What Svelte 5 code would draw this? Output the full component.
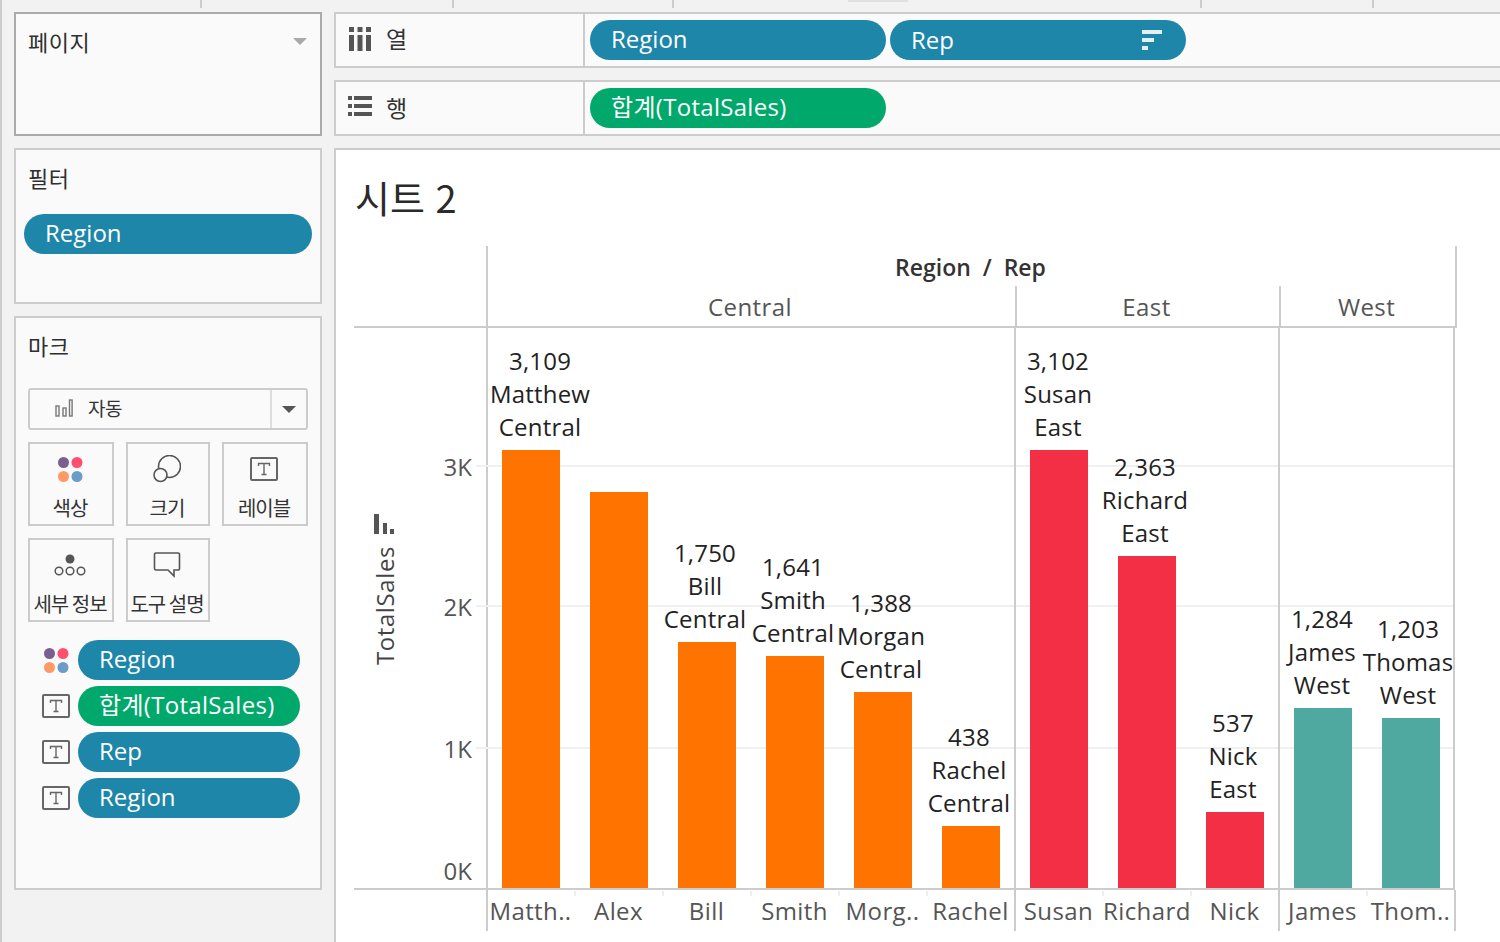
<script>
  const panes = [
    { color: '#ff7300', w: 528, bars: [
      { h: 438, l: ['3,109','Matthew','Central'], n: 'Matth..', dx: 9 },
      { h: 396, l: [], n: 'Alex' },
      { h: 246, l: ['1,750','Bill','Central'], n: 'Bill', dx: -2 },
      { h: 232, l: ['1,641','Smith','Central'], n: 'Smith', dx: -2 },
      { h: 196, l: ['1,388','Morgan','Central'], n: 'Morg..', dx: -2 },
      { h: 62, l: ['438','Rachel','Central'], n: 'Rachel', dx: -2 } ] },
    { color: '#f32f45', w: 264, bars: [
      { h: 438, l: ['3,102','Susan','East'], n: 'Susan', dx: -1 },
      { h: 332, l: ['2,363','Richard','East'], n: 'Richard', dx: -2 },
      { h: 76, l: ['537','Nick','East'], n: 'Nick', dx: -2 } ] },
    { color: '#4fa9a0', w: 176, bars: [
      { h: 180, l: ['1,284','James','West'], n: 'James', dx: -1 },
      { h: 170, l: ['1,203','Thomas','West'], n: 'Thom..', dx: -3 } ] }
  ];
  const ticks = [200, 252, 220, 528, 172];
  const heads = [['Central', 527], ['East', 264], ['West', 176]];
  const axis = [['3K', 467], ['2K', 607], ['1K', 749], ['0K', 871]];
  const markPills = [
    { k: 'color', t: 'Region', c: 'blue' },
    { k: 'text', t: '합계(TotalSales)', c: 'green' },
    { k: 'text', t: 'Rep', c: 'blue' },
    { k: 'text', t: 'Region', c: 'blue' }
  ];
</script>

{#snippet dots(size)}
  <svg class="ic" width={size} height={size} viewBox="0 0 26 26">
    <circle cx="6.500" cy="6.500" r="5.500" fill="#7b5f8f"/><circle cx="20" cy="6.500" r="5.500" fill="#ff4f6e"/>
    <circle cx="6.500" cy="20.500" r="5.500" fill="#ff9966"/><circle cx="20" cy="20.500" r="5.500" fill="#6b9cc9"/>
  </svg>
{/snippet}
{#snippet tbox(w, h)}
  <svg class="ic" width={w} height={h} viewBox="0 0 28 24">
    <rect x="1" y="1" width="26" height="22" rx="1" fill="none" stroke="#666" stroke-width="2"/>
    <path d="M8.500 9V6.500h11V9M14 6.500v11M11.500 17.500h5" fill="none" stroke="#666" stroke-width="1.400"/>
  </svg>
{/snippet}

<div class="page">
  <div class="topticks">
    {#each ticks as t}<span class="tick" style="width:{t}px"></span>{/each}
    <span class="topmark"></span>
  </div>
  <div class="layout">
    <aside class="side">
      <section class="card pages">
        <div class="cardtitle"><span>페이지</span><i class="caret"></i></div>
      </section>
      <section class="card filters">
        <div class="cardtitle">필터</div>
        <div class="pill blue wide">Region</div>
      </section>
      <section class="card marks">
        <div class="cardtitle">마크</div>
        <div class="select">
          <span class="selmain">
            <svg width="18" height="18" viewBox="0 0 18 18" fill="none" stroke="#777" stroke-width="1.400"><rect x="1" y="7" width="3" height="10"/><rect x="8" y="9" width="3" height="8"/><rect x="14.500" y="1" width="2.600" height="16"/></svg>
            <span>자동</span>
          </span>
          <span class="selbtn"><i class="caret dark"></i></span>
        </div>
        <div class="tiles">
          <div class="tile"><span class="tileic">{@render dots(26)}</span><span>색상</span></div>
          <div class="tile">
            <span class="tileic"><svg class="ic" width="28" height="28" viewBox="0 0 28 28" fill="none" stroke="#555" stroke-width="1.600"><circle cx="16.500" cy="11.500" r="11"/><circle cx="7.500" cy="20" r="6.500" fill="#fafafa"/></svg></span>
            <span>크기</span>
          </div>
          <div class="tile"><span class="tileic">{@render tbox(28, 24)}</span><span>레이블</span></div>
          <div class="tile">
            <span class="tileic"><svg class="ic" width="32" height="24" viewBox="0 0 32 24"><circle cx="16" cy="6" r="4.500" fill="#555"/><g fill="none" stroke="#555" stroke-width="1.500"><circle cx="5" cy="18" r="3.800"/><circle cx="16" cy="18" r="3.800"/><circle cx="27" cy="18" r="3.800"/></g></svg></span>
            <span>세부 정보</span>
          </div>
          <div class="tile">
            <span class="tileic"><svg class="ic" width="28" height="26" viewBox="0 0 28 26"><path d="M3 1h22a1.500 1.500 0 0 1 1.500 1.500v14a1.500 1.500 0 0 1-1.500 1.500h-4v6l-6-6H3a1.500 1.500 0 0 1-1.500-1.500v-14A1.500 1.500 0 0 1 3 1z" fill="none" stroke="#555" stroke-width="1.600"/></svg></span>
            <span>도구 설명</span>
          </div>
        </div>
        <div class="markpills">
          {#each markPills as p}
            <div class="markrow">
              <span class="mi">{#if p.k === 'color'}{@render dots(26)}{:else}{@render tbox(28, 24)}{/if}</span>
              <div class="pill {p.c} fill">{p.t}</div>
            </div>
          {/each}
        </div>
      </section>
    </aside>

    <main class="main">
      <div class="shelf">
        <div class="shelfhead first">
          <svg width="22" height="24" viewBox="0 0 22 24" fill="#555"><rect x="0" y="0" width="5" height="5"/><rect x="8.500" y="0" width="5" height="5"/><rect x="17" y="0" width="5" height="5"/><rect x="0" y="8" width="5" height="16"/><rect x="8.500" y="8" width="5" height="16"/><rect x="17" y="8" width="5" height="16"/></svg>
          <span>열</span>
        </div>
        <div class="shelfbody">
          <div class="pill blue sh">Region</div>
          <div class="pill blue sh sort">Rep
            <svg width="20" height="20" viewBox="0 0 20 20" fill="#e3f1f5"><rect width="20" height="4"/><rect y="8" width="12" height="4"/><rect y="16" width="6" height="4"/></svg>
          </div>
        </div>
      </div>
      <div class="shelf">
        <div class="shelfhead second">
          <svg width="24" height="20" viewBox="0 0 24 20" fill="#555"><rect width="4" height="4"/><rect x="6" width="18" height="4"/><rect y="8" width="4" height="4"/><rect x="6" y="8" width="18" height="4"/><rect y="16" width="4" height="4"/><rect x="6" y="16" width="18" height="4"/></svg>
          <span>행</span>
        </div>
        <div class="shelfbody">
          <div class="pill green sh">합계(TotalSales)</div>
        </div>
      </div>

      <div class="sheet">
        <h1>시트 2</h1>
        <div class="viz">
          <div class="headrow">
            <div class="corner"></div>
            <div class="headcol">
              <div class="vtitle">Region&nbsp; /&nbsp; Rep</div>
              <div class="regions">
                {#each heads as h}<div class="region" style="width:{h[1]}px">{h[0]}</div>{/each}
              </div>
            </div>
          </div>
          <div class="plotrow">
            <div class="axis">
              <div class="axtitle">
                <svg width="20" height="20" viewBox="0 0 20 20" fill="#555"><rect x="0" y="0" width="5" height="20"/><rect x="9" y="9" width="4" height="11"/><rect x="16" y="15" width="4" height="5"/></svg>
                <span>TotalSales</span>
              </div>
              {#each axis as a}
                <span class="axlabel" style="top:{a[1] - 328}px">{a[0]}</span>
              {/each}
            </div>
            <div class="plot">
              {#each [606, 748, 466] as g}<i class="grid" style="top:{g - 329}px"></i>{/each}
              {#each panes as p}
                <div class="pane" style="width:{p.w}px">
                  {#each p.bars as b}
                    <div class="col">
                      {#if b.l.length}
                        <div class="lab" style="transform:translateX({b.dx}px)">{#each b.l as line}<div>{line}</div>{/each}</div>
                      {/if}
                      <div class="bar" style="height:{b.h}px;background:{p.color}"></div>
                    </div>
                  {/each}
                </div>
              {/each}
            </div>
          </div>
          <div class="namerow">
            <div class="corner2"></div>
            {#each panes as p}
              <div class="namepane" style="width:{p.w}px">
                {#each p.bars as b}<div class="name">{b.n}</div>{/each}
              </div>
            {/each}
          </div>
        </div>
      </div>
    </main>
  </div>
</div>

<style>
  :global(body) { margin: 0; background: #f2f2f2; }
  .page { width: 1500px; height: 942px; overflow: hidden; position: relative; font-family: "Noto Sans", "Noto Sans CJK KR", sans-serif; color: #333; border-left: 2px solid #ccc; box-sizing: border-box; }
  .topticks { height: 8px; display: flex; }
  .tick { display: block; height: 8px; border-right: 2px solid #ccc; box-sizing: border-box; }
  .topmark { position: absolute; left: 846px; top: 0; width: 60px; height: 2px; background: #e0e0e0; }
  .layout { display: flex; gap: 12px; padding: 4px 0 0 12px; }
  .side { width: 308px; display: flex; flex-direction: column; gap: 12px; flex: none; }
  .card { box-sizing: border-box; background: #fafafa; border: 2px solid #ccc; padding: 0 0 0 12px; }
  .pages { height: 124px; border-color: #aaa; }
  .filters { height: 156px; padding-left: 8px; }
  .filters .cardtitle { padding-left: 4px; }
  .marks { height: 574px; }
  .cardtitle { display: flex; justify-content: space-between; align-items: center; font-family: "Noto Sans CJK KR", sans-serif; font-size: 22px; line-height: 32px; padding-top: 11px; color: #2f2f2f; letter-spacing: .5px; }
  .caret { display: block; width: 0; height: 0; border: 7px solid transparent; border-top: 7px solid #aaa; border-bottom: 0; margin-right: 13px; }
  .caret.dark { border-top-color: #555; margin: 0; }
  .pill { box-sizing: border-box; height: 40px; border-radius: 20px; color: #fff; font-size: 24px; line-height: 38px; padding-left: 21px; font-family: "Open Sans", "Noto Sans CJK KR", sans-serif; font-weight: 400; white-space: nowrap; }
  .blue { background: #1e86a8; }
  .green { background: #00a96b; letter-spacing: .3px; }
  .wide { width: 288px; margin-top: 21px; }
  .select { margin-top: 27px; width: 280px; height: 42px; box-sizing: border-box; border: 2px solid #ccc; border-radius: 3px; display: flex; }
  .selmain { flex: 1; display: flex; align-items: center; gap: 15px; padding: 0 0 3px 25px; border-right: 2px solid #ddd; font: 19px/1 "Noto Sans CJK KR", sans-serif; letter-spacing: -.5px; }
  .selbtn { width: 34px; display: flex; align-items: center; justify-content: center; }
  .tiles { display: grid; grid-template-columns: 86px 84px 86px; gap: 12px 12px; width: 280px; margin-top: 12px; }
  .tile { box-sizing: border-box; height: 84px; border: 2px solid #ccc; display: flex; flex-direction: column; align-items: center; justify-content: space-between; padding: 11px 2px 3px 0; font: 20px/26px "Noto Sans CJK KR", sans-serif; letter-spacing: -1px; white-space: nowrap; }
  .tileic { height: 28px; display: flex; align-items: center; }
  .ic { display: block; flex: none; }
  .markpills { display: flex; flex-direction: column; gap: 6px; margin-top: 18px; }
  .markrow { display: flex; align-items: center; }
  .mi { width: 28px; margin-left: 14px; margin-right: 8px; display: flex; justify-content: center; padding-right: 1px; box-sizing: border-box; }
  .fill { width: 222px; }
  .main { width: 1200px; flex: none; display: flex; flex-direction: column; gap: 12px; }
  .shelf { box-sizing: border-box; height: 56px; background: #fafafa; border: 2px solid #ccc; border-right: 0; display: flex; }
  .shelfhead { box-sizing: border-box; width: 249px; flex: none; border-right: 2px solid #ccc; display: flex; align-items: center; gap: 14px; padding-left: 12px; font: 23px/1 "Noto Sans CJK KR", sans-serif; }
  .shelfhead.first { padding: 0 0 2px 13px; gap: 15px; }
  .shelfhead.first span { transform: translateY(-1px); }
  .shelfhead.second { padding-bottom: 4px; }
  .shelfhead.second span { transform: translateY(1px); }
  .shelfbody { display: flex; gap: 4px; padding: 6px 0 0 5px; }
  .sh { width: 296px; }
  .sort { display: flex; justify-content: space-between; align-items: center; padding-right: 24px; }
  .sheet { background: #fff; border: 2px solid #ccc; border-right: 0; height: 800px; box-sizing: border-box; }
  h1 { margin: 0; font: 400 38px/48px "Noto Sans CJK KR", "Noto Sans", sans-serif; padding: 23px 0 0 19px; color: #2a2a2a; height: 49px; word-spacing: 2px; }
  .viz { margin: 24px 0 0 18px; width: 1103px; }
  .headrow { display: flex; height: 82px; }
  .corner { width: 132px; border-bottom: 2px solid #ccc; box-sizing: border-box; flex: none; }
  .headcol { width: 967px; flex: none; border-left: 2px solid #ccc; border-right: 2px solid #ccc; box-sizing: content-box; }
  .vtitle { height: 40px; text-align: center; font-size: 23px; line-height: 42px; font-weight: 600; color: #333; font-family: "Open Sans", sans-serif; padding-right: 2px; box-sizing: border-box; }
  .regions { display: flex; height: 40px; border-bottom: 2px solid #ccc; }
  .region { box-sizing: border-box; border-left: 2px solid #ccc; padding-right: 3px; text-align: center; font-size: 24px; line-height: 42px; letter-spacing: .4px; color: #555; font-family: "Open Sans", sans-serif; }
  .region:first-child { border-left: 0; }
  .plotrow { display: flex; height: 560px; width: 1101px; border-bottom: 2px solid #ccc; }
  .axis { width: 132px; position: relative; flex: none; }
  .axtitle { position: absolute; left: 17px; top: 186px; width: 28px; display: flex; flex-direction: column; align-items: center; gap: 12px; color: #444; }
  .axtitle svg { transform: translateX(-1px); }
  .axtitle span { writing-mode: vertical-rl; transform: rotate(180deg); font: 24px/28px "Open Sans", sans-serif; letter-spacing: .6px; }
  .axlabel { position: absolute; right: 14px; transform: translateY(-50%); font: 24px/30px "Open Sans", sans-serif; color: #555; }
  .plot { position: relative; display: flex; border-left: 2px solid #ccc; }
  .grid { position: absolute; left: -12px; width: 979px; height: 2px; background: #f0f0f0; }
  .pane { display: flex; position: relative; flex: none; }
  .pane:first-of-type { margin-left: -1px; }
  .pane + .pane::before { content: ""; position: absolute; left: -1px; top: 0; bottom: 0; width: 2px; background: #ccc; }
  .pane:last-child::after { content: ""; position: absolute; right: 0; top: 0; bottom: 0; width: 2px; background: #ccc; }
  .col { width: 88px; flex: none; display: flex; flex-direction: column; justify-content: flex-end; align-items: center; position: relative; }
  .bar { width: 58px; flex: none; position: relative; }
  .lab { font: 24px/33px "Open Sans", sans-serif; color: #222; text-align: center; white-space: nowrap; letter-spacing: .2px; padding-bottom: 7px; position: relative; }
  .namerow { display: flex; height: 41px; }
  .corner2 { width: 133px; flex: none; }
  .namepane { display: flex; flex: none; position: relative; }
  .namepane::before { content: ""; position: absolute; left: -1px; top: 0; bottom: 0; width: 2px; background: #ccc; }
  .namepane:last-child::after { content: ""; position: absolute; right: -1px; top: 0; bottom: 0; width: 2px; background: #ccc; }
  .name { width: 88px; flex: none; padding-right: 1px; box-sizing: border-box; text-align: center; font: 24px/42px "Open Sans", sans-serif; letter-spacing: .4px; color: #555; white-space: nowrap; position: relative; }
  .name + .name::before { content: ""; position: absolute; left: -1px; top: 1px; height: 5px; width: 2px; background: #eee; }
</style>
